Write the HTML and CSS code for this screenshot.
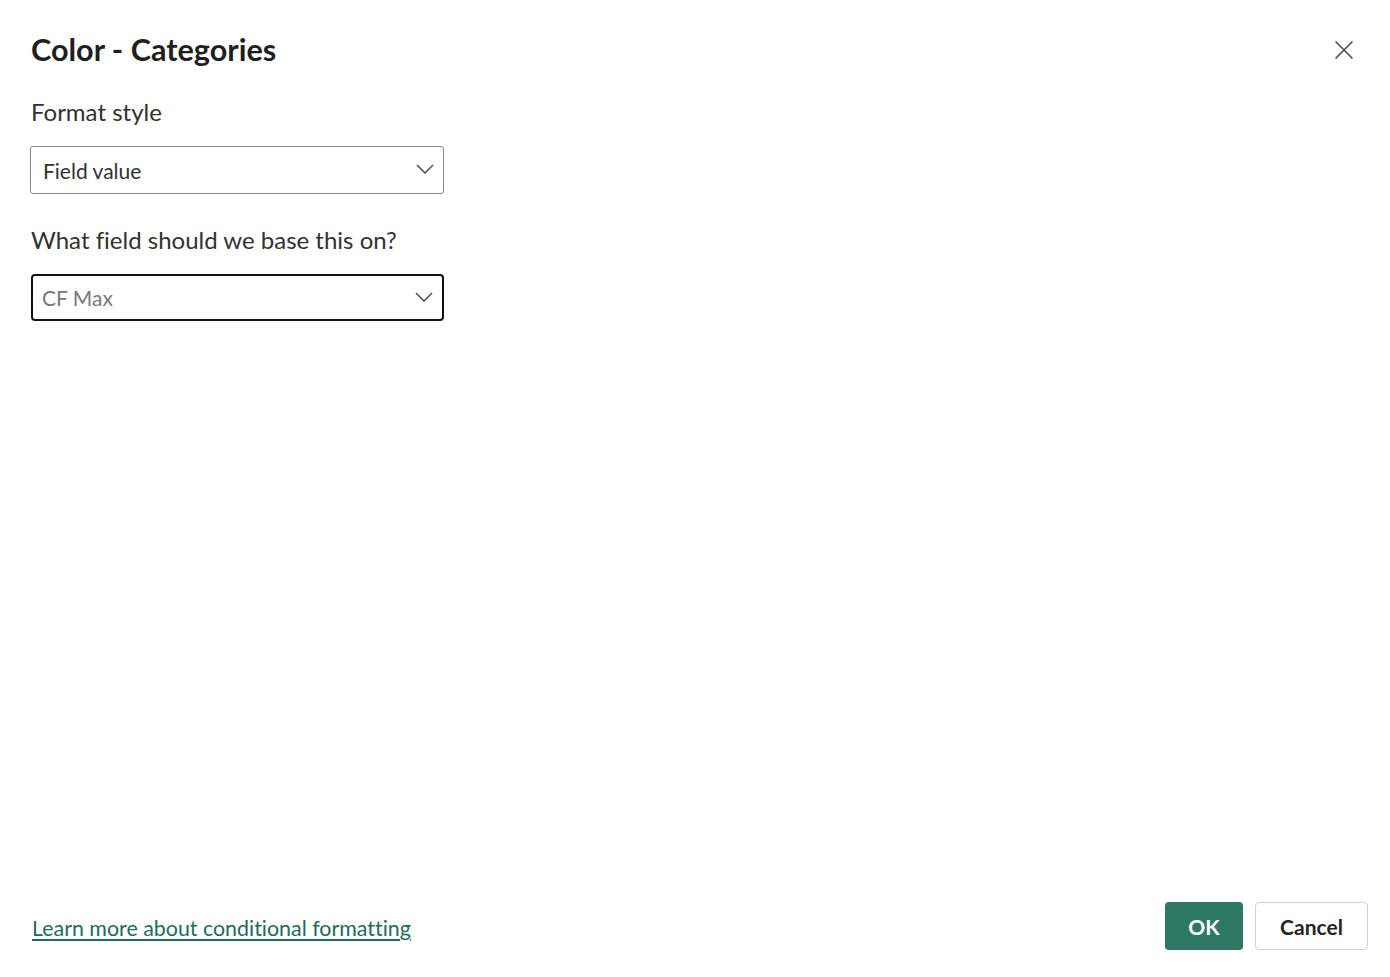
FILE: index.html
```html
<!DOCTYPE html>
<html lang="en">
<head>
  <meta charset="UTF-8">
  <title>Color - Categories</title>
  <link rel="stylesheet" href="styles.css">
</head>
<body>

  <div class="dialog">
    <!-- Header -->
    <div class="dialog-head">
      <h1 class="dialog-title">Color - Categories</h1>
      <button class="close-btn" aria-label="Close">
        <svg width="18" height="18" viewBox="0 0 18 18">
          <path d="M0.5 0.5 L17.5 17.5 M17.5 0.5 L0.5 17.5" stroke="#444" stroke-width="1.5" fill="none"/>
        </svg>
      </button>
    </div>

    <!-- Body -->
    <div class="dialog-body">
      <label class="field-label">Format style</label>
      <div class="dropdown">
        <span class="dropdown-text">Field value</span>
        <svg class="chevron" width="18" height="10" viewBox="0 0 18 10">
          <path d="M1 1 L9 9 L17 1" stroke="#444" stroke-width="1.4" fill="none"/>
        </svg>
      </div>

      <label class="field-label second">What field should we base this on?</label>
      <div class="dropdown focused">
        <span class="dropdown-text placeholder">CF Max</span>
        <svg class="chevron" width="18" height="10" viewBox="0 0 18 10">
          <path d="M1 1 L9 9 L17 1" stroke="#444" stroke-width="1.4" fill="none"/>
        </svg>
      </div>
    </div>

    <!-- Footer -->
    <div class="dialog-foot">
      <a class="learn-link" href="#">Learn more about conditional formatting</a>
      <div class="buttons">
        <button class="btn btn-primary">OK</button>
        <button class="btn btn-secondary">Cancel</button>
      </div>
    </div>
  </div>

</body>
</html>
```

FILE: styles.css
```css
body {
  margin: 0;
  font-family: 'Segoe UI', Lato, 'Open Sans', sans-serif;
  font-variant-ligatures: none;
  background: #fff;
  color: #252423;
}

.dialog {
  box-sizing: border-box;
  height: 977px;
  padding: 26px 22px 27px 31px;
  display: flex;
  flex-direction: column;
}

/* Header */
.dialog-head {
  display: flex;
  justify-content: space-between;
  align-items: center;
}

.dialog-title {
  margin: 0;
  font-size: 30.6px;
  font-weight: 700;
  line-height: 48px;
  color: #201f1e;
}

.close-btn {
  background: none;
  border: none;
  padding: 0;
  width: 18px;
  height: 18px;
  margin-right: 15px;
  cursor: pointer;
}

/* Body */
.dialog-body {
  flex: 1;
  display: flex;
  flex-direction: column;
  align-items: flex-start;
}

.field-label {
  margin-top: 22px;
  font-size: 24px;
  line-height: 32px;
  color: #323130;
}

.field-label.second {
  margin-top: 30px;
}

.dropdown {
  box-sizing: border-box;
  margin-top: 18px;
  width: 414px;
  height: 48px;
  border: 1px solid #8a8886;
  border-radius: 3px;
  padding: 0 9px 0 12px;
  display: flex;
  align-items: center;
  justify-content: space-between;
  margin-left: -1px;
}

.dropdown.focused {
  width: 413px;
  height: 47px;
  margin-top: 18px;
  margin-left: 0;
  border: 2px solid #111;
  border-radius: 4px;
  padding-left: 9px;
}

.dropdown-text {
  font-size: 21px;
  color: #323130;
}

.dropdown-text.placeholder {
  color: #7a7775;
}

.chevron {
  margin-top: -2px;
}

/* Footer */
.dialog-foot {
  display: flex;
  justify-content: space-between;
  align-items: center;
}

.learn-link {
  margin-left: 1px;
  margin-top: 4px;
  font-size: 21.4px;
  color: #1e6b5d;
  text-decoration: underline;
  text-underline-offset: 3px;
}

.buttons {
  display: flex;
  gap: 12px;
}

.btn {
  box-sizing: border-box;
  height: 48px;
  border-radius: 4px;
  font-family: inherit;
  font-size: 21px;
  font-weight: 700;
  cursor: pointer;
}

.btn-primary {
  width: 78px;
  background: #2d7765;
  border: none;
  color: #fff;
}

.btn-secondary {
  width: 113px;
  background: #fff;
  border: 1px solid #d1d1d1;
  color: #252423;
}
```
